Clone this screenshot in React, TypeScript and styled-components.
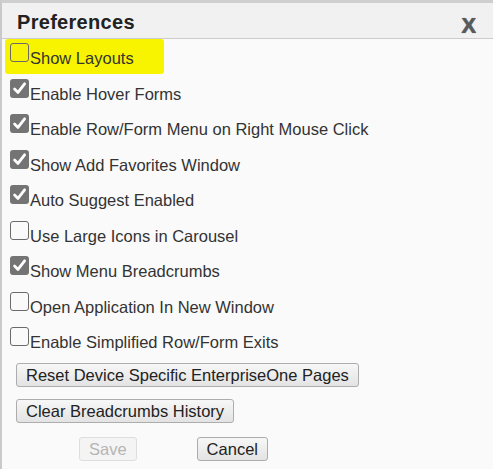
import React from "react";
import styled, { createGlobalStyle } from "styled-components";

const Global = createGlobalStyle`
  html, body { margin: 0; padding: 0; background: #fafafa; }
  body { font-family: "Liberation Sans", Arial, sans-serif; }
`;

const Dialog = styled.div`
  box-sizing: border-box;
  width: 100%;
  height: 469px;
  overflow: hidden;
  background: #fafafa;
  border-left: 2px solid #c9c9c9;
  border-top: 3px solid #cfcfcf;
  box-shadow: inset 0 1px 0 #e2e2e2;
`;

const Header = styled.div`
  box-sizing: border-box;
  height: 36px;
  display: flex;
  align-items: flex-start;
  justify-content: space-between;
  padding: 8px 17px 0 15px;
  background: #f1f1f1;
  border-bottom: 1px solid #cbcbcb;
`;

const Title = styled.h1`
  margin: 0;
  font-size: 20px;
  line-height: 23px;
  font-weight: bold;
  color: #222;
  letter-spacing: 0.3px;
`;

const Close = styled.span`
  margin-top: 3px;
  font-size: 22px;
  line-height: 23px;
  font-weight: bold;
  color: #5a5a5a;
  text-shadow: 0 0 1px #777, 0.5px 0 0 #5a5a5a;
`;

const List = styled.div`
  display: flex;
  flex-direction: column;
`;

const Row = styled.label<{ $highlight?: boolean }>`
  box-sizing: border-box;
  display: flex;
  align-items: flex-start;
  width: fit-content;
  margin-left: 3px;
  padding: 4px ${(p) => (p.$highlight ? "30px" : "0")} 0 5px;
  background: ${(p) => (p.$highlight ? "#f8f400" : "transparent")};
  border-radius: ${(p) => (p.$highlight ? "3px" : "0")};
  height: ${(p) => (p.$highlight ? "34.5px" : "35.5px")};
  margin-bottom: ${(p) => (p.$highlight ? "1px" : "0")};
`;

const Box = styled.span<{ $checked?: boolean }>`
  box-sizing: border-box;
  width: 19px;
  height: 19px;
  flex: none;
  border-radius: 3px;
  border: ${(p) => (p.$checked ? "none" : "1.5px solid #6a6a6a")};
  background: ${(p) => (p.$checked ? "#747474" : "transparent")};
  display: flex;
  align-items: center;
  justify-content: center;
`;

const LabelText = styled.span`
  margin-top: 6px;
  margin-left: 1px;
  font-size: 16.5px;
  line-height: 19px;
  color: #333;
  white-space: nowrap;
`;

const Actions = styled.div`
  display: flex;
  flex-direction: column;
  align-items: flex-start;
  gap: 12px;
  padding: 4px 0 0 14px;
`;

const Button = styled.button<{ $disabled?: boolean }>`
  box-sizing: border-box;
  height: 24px;
  padding: 0 9px;
  font-family: "Liberation Sans", Arial, sans-serif;
  font-size: 16.5px;
  line-height: 22px;
  color: ${(p) => (p.$disabled ? "#b4b4b4" : "#222")};
  background: ${(p) =>
    p.$disabled ? "#f4f4f4" : "linear-gradient(#f7f7f7, #e3e3e3)"};
  border: 1px solid ${(p) => (p.$disabled ? "#dedede" : "#adadad")};
  border-radius: 3px;
  cursor: pointer;
`;

const Footer = styled.div`
  display: flex;
  gap: 60px;
  padding: 14px 0 0 77px;
`;

const Check = () => (
  <svg width="15" height="15" viewBox="0 0 15 15">
    <path
      d="M2.6 8 L6 11.4 L12.6 2.8"
      fill="none"
      stroke="#fff"
      strokeWidth="2.8"
      strokeLinecap="round"
      strokeLinejoin="round"
    />
  </svg>
);

const items: { label: string; checked: boolean; highlight?: boolean }[] = [
  { label: "Show Layouts", checked: false, highlight: true },
  { label: "Enable Hover Forms", checked: true },
  { label: "Enable Row/Form Menu on Right Mouse Click", checked: true },
  { label: "Show Add Favorites Window", checked: true },
  { label: "Auto Suggest Enabled", checked: true },
  { label: "Use Large Icons in Carousel", checked: false },
  { label: "Show Menu Breadcrumbs", checked: true },
  { label: "Open Application In New Window", checked: false },
  { label: "Enable Simplified Row/Form Exits", checked: false },
];

export default function App() {
  return (
    <>
      <Global />
      <Dialog>
        <Header>
          <Title>Preferences</Title>
          <Close>X</Close>
        </Header>
        <List>
          {items.map((it) => (
            <Row key={it.label} $highlight={it.highlight}>
              <Box $checked={it.checked}>{it.checked && <Check />}</Box>
              <LabelText>{it.label}</LabelText>
            </Row>
          ))}
        </List>
        <Actions>
          <Button>Reset Device Specific EnterpriseOne Pages</Button>
          <Button>Clear Breadcrumbs History</Button>
        </Actions>
        <Footer>
          <Button $disabled>Save</Button>
          <Button>Cancel</Button>
        </Footer>
      </Dialog>
    </>
  );
}
